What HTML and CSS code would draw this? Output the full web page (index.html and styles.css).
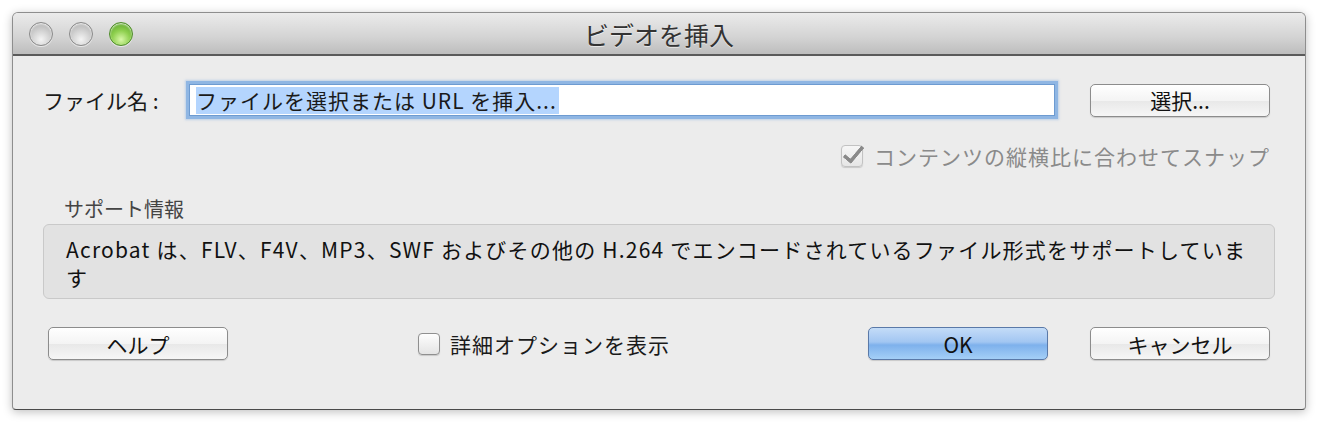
FILE: index.html
```html
<!doctype html>
<html lang="ja">
<head>
    <meta charset="utf-8">
    <title>ビデオを挿入</title>
    <link rel="stylesheet" href="styles.css">
</head>
<body>
    <div id="window">
        <div id="title-bar">
            <div class="lights">
                <span class="light"></span>
                <span class="light"></span>
                <span class="light green"></span>
            </div>
            <div class="title">ビデオを挿入</div>
        </div>
        <div id="content-panel">
            <div class="file-row">
                <label class="file-label">ファイル名 :</label>
                <div class="file-input"><span class="selected">ファイルを選択または URL を挿入...</span></div>
                <button class="mac-button" type="button">選択...</button>
            </div>
            <div class="snap-row">
                <span class="check checked disabled"></span>
                <span class="snap-label">コンテンツの縦横比に合わせてスナップ</span>
            </div>
            <div class="info-title">サポート情報</div>
            <div class="info-box">Acrobat は、FLV、F4V、MP3、SWF およびその他の H.264 でエンコードされているファイル形式をサポートしていま<br>す</div>
            <div class="button-row">
                <button class="mac-button" type="button">ヘルプ</button>
                <div class="advanced">
                    <span class="check"></span>
                    <span>詳細オプションを表示</span>
                </div>
                <button class="mac-button default" type="button">OK</button>
                <button class="mac-button cancel" type="button">キャンセル</button>
            </div>
        </div>
    </div>
</body>
</html>
```

FILE: styles.css
```css
body {
    margin: 0;
    padding: 12px;
    background-color: #fff;
    font-family: "Noto Sans CJK JP", "Noto Sans", sans-serif;
    color: #1a1a1a;
}
#window {
    width: 1292px;
    height: 396px;
    border: 1px solid #8e8e8e;
    border-bottom-color: #4a4a4a;
    border-radius: 6px 6px 4px 4px;
    background-color: #ececec;
    box-shadow: 0 2px 10px rgba(0, 0, 0, 0.25);
    overflow: hidden;
    display: flex;
    flex-direction: column;
}
#title-bar {
    height: 41px;
    flex: none;
    display: flex;
    align-items: center;
    position: relative;
    background: linear-gradient(#ebebeb, #d3d3d3 60%, #bdbdbd);
    border-bottom: 2px solid #5a5a5a;
}
.lights {
    display: flex;
    gap: 16px;
    padding-left: 16px;
}
.light {
    width: 22px;
    height: 22px;
    border-radius: 50%;
    border: 1px solid #8a8a8a;
    background: radial-gradient(circle at 50% 75%, #f4f4f4 0, #d6d6d6 40%, #a8a8a8 100%);
    box-shadow: inset 0 1px 2px rgba(255, 255, 255, 0.9), 0 1px 0 rgba(255, 255, 255, 0.6);
}
.light.green {
    border-color: #4f8d2a;
    background: radial-gradient(circle at 50% 75%, #d8f7a8 0, #8fd04f 45%, #4e9a22 100%);
}
.title {
    position: absolute;
    left: 0;
    right: 0;
    text-align: center;
    font-size: 25px;
    color: #333;
    text-shadow: 0 1px 0 rgba(255, 255, 255, 0.6);
    pointer-events: none;
}
#content-panel {
    padding: 25px 30px 0 30px;
    display: flex;
    flex-direction: column;
}
.file-row {
    display: flex;
    align-items: center;
    height: 38px;
    margin-right: 5px;
}
.file-label {
    width: 145px;
    font-size: 21px;
    flex: none;
}
.file-input {
    flex: 1;
    height: 30px;
    border: 1px solid #6d9bd1;
    box-shadow: 0 0 0 3px #8fb6e3, 0 0 2px 4px rgba(143, 182, 227, 0.5);
    background-color: #fff;
    margin: 0 35px 0 1px;
    display: flex;
    align-items: center;
    padding-left: 6px;
    font-size: 21px;
}
.selected {
    background-color: #b4d5fe;
    line-height: 27px;
    padding-right: 2px;
    letter-spacing: 1px;
}
.mac-button {
    width: 180px;
    height: 33px;
    flex: none;
    border: 1px solid #8c8c8c;
    border-radius: 5px;
    background: linear-gradient(#ffffff, #f4f4f4 50%, #e8e8e8 51%, #f6f6f6);
    box-shadow: 0 1px 1px rgba(0, 0, 0, 0.15);
    font-family: inherit;
    font-size: 21px;
    color: #111;
    padding: 0;
    line-height: 30px;
}
.mac-button.default {
    margin-left: auto;
    border-color: #5a79a8;
    background: linear-gradient(#c4dcf8, #a2c6f2 45%, #7eb1ec 55%, #a4cff7);
}
.mac-button.cancel {
    margin-left: 42px;
}
.snap-row {
    display: flex;
    justify-content: flex-end;
    align-items: center;
    gap: 11px;
    margin-top: 25px;
    margin-right: 6px;
    height: 24px;
}
.snap-label {
    font-size: 21px;
    color: #8a8a8a;
    letter-spacing: 1px;
    margin-right: -1px;
}
.check {
    width: 20px;
    height: 20px;
    border: 1px solid #8f8f8f;
    border-radius: 4px;
    background: linear-gradient(#fdfdfd, #e4e4e4);
    box-shadow: 0 1px 1px rgba(0, 0, 0, 0.15);
    flex: none;
    position: relative;
}
.check.disabled {
    border-color: #c2c2c2;
    background: linear-gradient(#f6f6f6, #e6e6e6);
}
.check.checked::after {
    content: "";
    position: absolute;
    left: 6px;
    top: -4px;
    width: 7px;
    height: 17px;
    border-right: 4px solid #8a8a8a;
    border-bottom: 4px solid #8a8a8a;
    transform: rotate(40deg);
    border-radius: 1px;
}
.info-title {
    font-size: 20px;
    color: #444;
    margin: 27px 0 0 21px;
    line-height: 28px;
}
.info-box {
    margin: 1px 0 0 0;
    height: 52px;
    padding: 10px 22px 11px 22px;
    background-color: #e2e2e2;
    border: 1px solid #c9c9c9;
    border-radius: 6px;
    font-size: 21px;
    line-height: 28px;
    color: #111;
    white-space: nowrap;
    letter-spacing: 1.2px;
}
.button-row {
    display: flex;
    align-items: center;
    margin-top: 28px;
    padding-left: 5px;
    margin-right: 5px;
}
.advanced {
    display: flex;
    align-items: center;
    gap: 10px;
    margin-left: 190px;
    font-size: 21px;
    letter-spacing: 1px;
}
```
